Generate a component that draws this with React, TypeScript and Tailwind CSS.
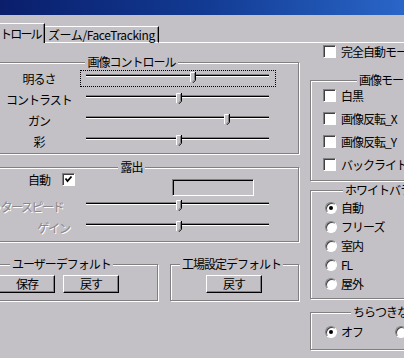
import React from "react";

const BG = "bg-[#c4c1c6]";

function Thumb() {
  return (
    <svg width="6" height="11" viewBox="0 0 6 11" className="block">
      <polygon points="0,0 5,0 5,8 2.5,10.5 0,8" fill="#c4c1c6" />
      <polyline points="0.5,10 0.5,0.5 4.5,0.5" fill="none" stroke="#ffffff" strokeWidth="1" />
      <polyline points="5.5,0 5.5,8.2 3,10.8" fill="none" stroke="#000000" strokeWidth="1" />
      <polyline points="4.5,1 4.5,7.8 2.5,9.8" fill="none" stroke="#808080" strokeWidth="1" />
    </svg>
  );
}

function Slider({ value, focus }: { value: number; focus?: boolean }) {
  const left = 6 + value * 183 - 3;
  return (
    <div
      className={
        "relative w-[196px] h-[17px] shrink-0 " +
        (focus ? "border border-dotted border-black" : "border border-transparent")
      }
    >
      <div className="absolute left-[5px] right-[6px] top-[3px] h-[3px] border-t border-t-[#808080] border-b border-b-white bg-black" />
      <div className="absolute top-[1px]" style={{ left: left - 1 }}>
        <Thumb />
      </div>
    </div>
  );
}

function Check({ checked }: { checked?: boolean }) {
  return (
    <div className="w-[13px] h-[13px] shrink-0 bg-white border border-t-[#808080] border-l-[#808080] border-r-white border-b-white shadow-[inset_1px_1px_0_#404040] flex items-center justify-center">
      {checked && (
        <svg width="9" height="9" viewBox="0 0 9 9">
          <path d="M1.5 3.5 L3.5 6 L7.5 1.5" fill="none" stroke="#000" strokeWidth="1.8" />
        </svg>
      )}
    </div>
  );
}

function Radio({ checked }: { checked?: boolean }) {
  return (
    <div className="w-[12px] h-[12px] shrink-0 rounded-full bg-white border border-t-[#808080] border-l-[#808080] border-r-white border-b-white shadow-[inset_1px_1px_0_#404040] flex items-center justify-center">
      {checked && <div className="w-[4px] h-[4px] rounded-full bg-black" />}
    </div>
  );
}

function Button({ children }: { children: React.ReactNode }) {
  return (
    <div className="w-[56px] h-[18px] shrink-0 border border-t-white border-l-white border-r-black border-b-black shadow-[inset_-1px_-1px_0_#808080] flex items-center justify-center text-black">
      {children}
    </div>
  );
}

const groupCls =
  "relative border border-[#808080] shadow-[inset_1px_1px_0_#ffffff,1px_1px_0_#ffffff]";

function Title({ children, left }: { children: React.ReactNode; left?: string }) {
  if (!left) {
    return (
      <div className="absolute inset-x-0 top-[-7px] flex justify-center">
        <span className={"px-[2px] leading-[12px] " + BG}>{children}</span>
      </div>
    );
  }
  return (
    <span className={"absolute top-[-7px] px-[2px] leading-[12px] whitespace-nowrap " + BG + " " + left}>
      {children}
    </span>
  );
}

const dis = "text-[#8a878c] [text-shadow:1px_1px_0_#ffffff]";

export default function App() {
  return (
    <div
      className={"w-[404px] h-[358px] overflow-hidden text-[12px] leading-[12px] tracking-[-1px] text-black " + BG}
      style={{ fontFamily: '"Noto Sans CJK JP", "Noto Sans", sans-serif' }}
    >
      {/* title bar */}
      <div className="h-[15px] bg-linear-to-r from-[#0a1e6c] via-[#123a92] to-[#2a66c8]" />

      {/* tabs */}
      <div className="h-[28px] flex items-end">
        <div className="ml-[-6px] w-[51px] h-[20px] shrink-0 border-t border-t-white border-r border-r-black shadow-[inset_-1px_0_0_#808080] flex items-center pl-[6px] whitespace-nowrap tracking-[-1.8px]">
          トロール
        </div>
        <div className="w-[114px] h-[17px] shrink-0 border-t border-t-white border-r border-r-black border-b border-b-white shadow-[inset_-1px_0_0_#808080] flex items-center pl-[3px] whitespace-nowrap tracking-[-0.4px]">
          ズーム/FaceTracking
        </div>
        <div className="flex-1 border-b border-b-white" />
      </div>

      {/* content */}
      <div className="flex">
        {/* left column */}
        <div className="ml-[-36px] w-[335px] shrink-0">
          {/* 画像コントロール */}
          <div className={groupCls + " mt-[19px] pt-[5px] pb-[1px]"}>
            <Title>画像コントロール</Title>
            {[
              { l: "明るさ", v: 0.587, f: true },
              { l: "コントラスト", v: 0.51 },
              { l: "ガン", v: 0.77 },
              { l: "彩", v: 0.51 },
            ].map((r) => (
              <div key={r.l} className="h-[21px] flex items-center">
                <div className="w-[115px] shrink-0 pl-[35px] pr-[2px] text-center whitespace-nowrap">
                  {r.l}
                </div>
                <Slider value={r.v} focus={r.f} />
              </div>
            ))}
          </div>

          {/* 露出 */}
          <div className={groupCls + " mt-[13px] pb-[3px]"}>
            <Title>露出</Title>
            <div className="h-[28px] flex items-start">
              <div className="w-[97px] shrink-0 mt-[5px] text-right pr-[12px] leading-[13px]">自動</div>
              <div className="mt-[5px]">
                <Check checked />
              </div>
              <div className="ml-[97px] mt-[11px] w-[82px] h-[17px] shrink-0 border border-t-[#808080] border-l-[#808080] border-r-white border-b-white shadow-[inset_1px_1px_0_#000]" />
            </div>
            <div className="h-[21px] flex items-center">
              <div className={"w-[115px] shrink-0 pr-[17px] text-right whitespace-nowrap tracking-[-1.5px] " + dis}>
                シャッタースピード
              </div>
              <Slider value={0.51} />
            </div>
            <div className="h-[21px] flex items-center">
              <div className={"w-[115px] shrink-0 pr-[10px] text-right whitespace-nowrap " + dis}>
                ゲイン
              </div>
              <Slider value={0.51} />
            </div>
          </div>

          {/* defaults */}
          <div className="mt-[22px] flex gap-[12px]">
            <div className={groupCls + " w-[194px] h-[37px] pt-[10px] pl-[34px] flex gap-[8px] items-start"}>
              <Title left="left-[45px]">ユーザーデフォルト</Title>
              <Button>保存</Button>
              <Button>戻す</Button>
            </div>
            <div className={groupCls + " w-[129px] h-[37px] pt-[10px] pl-[35px] flex items-start"}>
              <Title left="left-[9px]">工場設定デフォルト</Title>
              <Button>戻す</Button>
            </div>
          </div>
        </div>

        {/* right column */}
        <div className="ml-[11px] w-[140px] shrink-0">
          <div className="mt-[2px] h-[13px] pl-[13px] flex items-center">
            <Check />
            <span className="ml-[5px] whitespace-nowrap">完全自動モード</span>
          </div>

          <div className={groupCls + " mt-[22px] h-[101px] pt-[3px]"}>
            <Title left="left-[46px]">画像モード</Title>
            {["白黒", "画像反転_X", "画像反転_Y", "バックライト補正"].map((t) => (
              <div key={t} className="h-[23px] pl-[12px] flex items-center">
                <Check />
                <span className="ml-[5px] whitespace-nowrap">{t}</span>
              </div>
            ))}
          </div>

          <div className={groupCls + " mt-[9px] h-[109px] pt-[7px]"}>
            <Title left="left-[32px]">ホワイトバランス</Title>
            {["自動", "フリーズ", "室内", "FL", "屋外"].map((t, i) => (
              <div key={t} className="h-[19px] pl-[14px] flex items-center">
                <Radio checked={i === 0} />
                <span className="ml-[4px] whitespace-nowrap">{t}</span>
              </div>
            ))}
          </div>

          <div className={groupCls + " mt-[13px] h-[38px] pt-[9px]"}>
            <Title left="left-[40px]">ちらつきなし</Title>
            <div className="h-[19px] pl-[14px] flex items-center">
              <div className="w-[70px] shrink-0 flex items-center">
                <Radio checked />
                <span className="ml-[4px]">オフ</span>
              </div>
              <Radio />
              <span className="ml-[4px]">50Hz</span>
            </div>
          </div>
        </div>
      </div>
    </div>
  );
}
